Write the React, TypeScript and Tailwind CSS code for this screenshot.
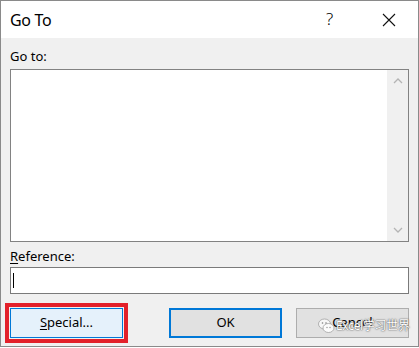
import React from "react";

const font = { fontFamily: '"Noto Sans", "Noto Sans CJK SC", sans-serif' };

export default function App() {
  return (
    <div className="w-[419px] h-[348px] bg-white" style={font}>
      <div className="w-[419px] h-[347px] border border-[#8a8a8a] flex flex-col">
        {/* title bar */}
        <div className="h-[37px] bg-white flex items-center pl-[9px] relative">
          <span className="text-[16px] text-black leading-none tracking-[-0.3px]">Go To</span>
          <span className="absolute left-[325px] top-[8px] text-[17px] leading-[20px] text-black font-light">?</span>
          <svg className="absolute left-[381px] top-[12px]" width="14" height="14" viewBox="0 0 14 14">
            <path d="M1 1 L13 13 M13 1 L1 13" stroke="#111" strokeWidth="1.1" fill="none" />
          </svg>
        </div>
        {/* body */}
        <div className="flex-1 bg-[#f0f0f0] px-[9px] pt-[10px] flex flex-col">
          <div className="h-[16px] leading-[16px] text-[13px] text-black">Go to:</div>
          <div className="mt-[5px] h-[173px] border border-[#828282] bg-white flex">
            <div className="flex-1" />
            <div className="w-[21px] bg-[#f0f0f0] flex flex-col justify-between items-center py-[8px]">
              <svg width="10" height="6" viewBox="0 0 10 6">
                <path d="M1 5 L5 1 L9 5" stroke="#b4b4b4" strokeWidth="1.3" fill="none" />
              </svg>
              <svg width="10" height="6" viewBox="0 0 10 6">
                <path d="M1 1 L5 5 L9 1" stroke="#b4b4b4" strokeWidth="1.3" fill="none" />
              </svg>
            </div>
          </div>
          <div className="mt-[6px] h-[16px] leading-[16px] text-[13px] text-black">
            <span className="underline underline-offset-2">R</span>eference:
          </div>
          <div className="mt-[3px] h-[27px] border border-[#7a7a7a] bg-white flex items-center pl-[2px]">
            <div className="w-px h-[15px] bg-black" />
          </div>
          <div className="mt-[14px] flex justify-between">
            <div className="relative">
              <button className="w-[113px] h-[30px] bg-[#e5f1fb] border border-[#0078d7] text-[13px] text-black flex items-center justify-center">
                <span><span className="underline underline-offset-2">S</span>pecial...</span>
              </button>
              <div className="absolute -left-[5px] -top-[5px] w-[123px] h-[40px] border-4 border-[#e3202a]" />
            </div>
            <div className="flex gap-[14px]">
              <button className="w-[113px] h-[30px] bg-[#e1e1e1] border-2 border-[#0078d7] text-[13px] text-black flex items-center justify-center">
                OK
              </button>
              <div className="relative">
                <button className="w-[113px] h-[30px] bg-[#e1e1e1] border border-[#adadad] text-[13px] text-black flex items-center justify-center">
                  Cancel
                </button>
                <div className="absolute left-[22px] top-[9px] flex items-center whitespace-nowrap">
                  <svg width="17" height="17" viewBox="0 0 17 17" className="opacity-90">
                    <ellipse cx="6.5" cy="7" rx="6" ry="5" fill="#fafafa" stroke="#9a9a9a" strokeWidth="0.8" />
                    <ellipse cx="10.5" cy="11" rx="5.5" ry="4.5" fill="#ffffff" stroke="#9a9a9a" strokeWidth="0.8" />
                    <circle cx="4.5" cy="6" r="0.8" fill="#777" />
                    <circle cx="8" cy="6" r="0.8" fill="#777" />
                    <circle cx="9" cy="10.5" r="0.7" fill="#888" />
                    <circle cx="12" cy="10.5" r="0.7" fill="#888" />
                  </svg>
                  <span className="ml-[1px] text-[12px] leading-none text-white [text-shadow:0_0_1px_#444,0_0_2px_#666] tracking-[-0.3px]">
                    Excel学习世界
                  </span>
                </div>
              </div>
            </div>
          </div>
        </div>
      </div>
    </div>
  );
}
